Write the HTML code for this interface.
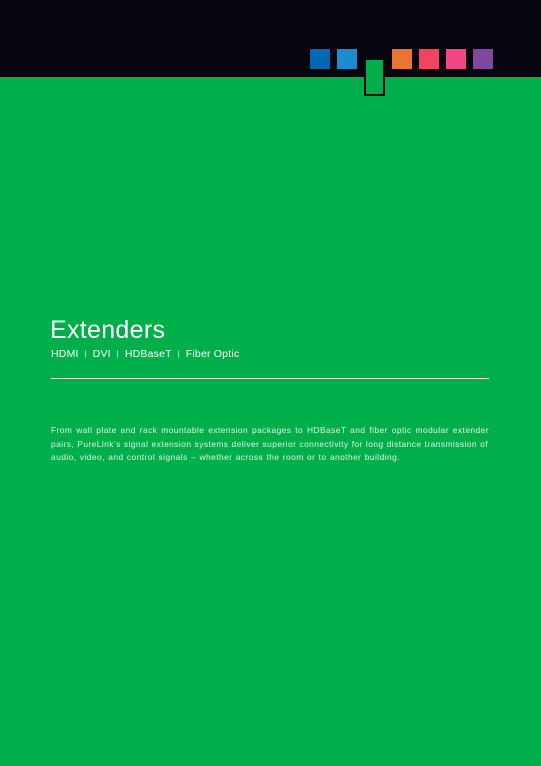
<!DOCTYPE html>
<html><head><style>
body{margin:0;width:541px;height:766px;background:#00af4a;position:relative;overflow:hidden;font-family:"Liberation Sans",sans-serif;color:#fff}
.top{position:absolute;left:0;top:0;width:541px;height:77px;background:#07060e}
.sq{position:absolute;top:49px;width:20px;height:20px}
.g{position:absolute;left:364px;top:58px;width:17px;height:34px;background:#00af4a;border:2px solid #07060e}
h1{position:absolute;left:50px;top:316px;margin:0;font-weight:normal;font-size:25px;letter-spacing:0.3px}
.sub{position:absolute;left:51px;top:348px;font-size:10.5px;letter-spacing:0.2px}
.sub i{font-style:normal;font-size:7px;margin:0 6px;vertical-align:1px}
.line{position:absolute;left:51px;top:378px;width:438px;height:1px;background:#e8f6ec}
.p{position:absolute;left:51px;top:424px;font-size:8.4px;line-height:13.5px;color:#e4f4e8;letter-spacing:0.45px}
.p div{text-align:justify;text-align-last:justify;white-space:nowrap}
</style></head><body>
<div class="top"></div>
<div class="sq" style="left:310px;background:#0168b4"></div>
<div class="sq" style="left:337px;background:#1d8bd0"></div>
<div class="sq" style="left:392px;background:#e87533"></div>
<div class="sq" style="left:419px;background:#f24360"></div>
<div class="sq" style="left:446px;background:#f34687"></div>
<div class="sq" style="left:473px;background:#7d4aa0"></div>
<div class="g"></div>
<h1>Extenders</h1>
<div class="sub">HDMI<i>|</i>DVI<i>|</i>HDBaseT<i>|</i>Fiber Optic</div>
<div class="line"></div>
<div class="p">
<div style="width:438px">From wall plate and rack mountable extension packages to HDBaseT and fiber optic modular extender</div>
<div style="width:437px">pairs, PureLink’s signal extension systems deliver superior connectivity for long distance transmission of</div>
<div style="width:349px">audio, video, and control signals – whether across the room or to another building.</div>
</div>
</body></html>
